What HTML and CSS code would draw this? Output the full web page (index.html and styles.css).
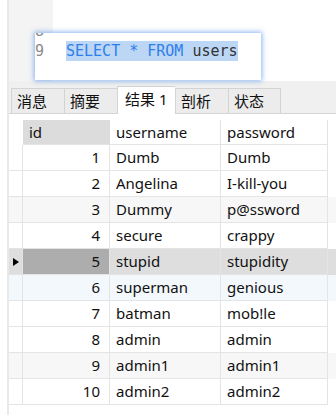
FILE: index.html
```html
<!DOCTYPE html>
<html lang="zh-CN">
<head>
    <meta charset="UTF-8">
    <title>查询结果</title>
    <link rel="stylesheet" href="styles.css">
</head>
<body>
    <div class="window">
        <div class="editor">
            <div class="gutter"></div>
            <div class="code-area"></div>
        </div>

        <div class="tabbar">
            <div class="tab">消息</div>
            <div class="tab">摘要</div>
            <div class="tab active">结果 1</div>
            <div class="tab">剖析</div>
            <div class="tab">状态</div>
        </div>

        <div class="grid">
            <div class="row head">
                <div class="cell ind"></div>
                <div class="cell sorted">id</div>
                <div class="cell">username</div>
                <div class="cell">password</div>
            </div>
            <div class="row">
                <div class="cell ind"></div>
                <div class="cell num">1</div>
                <div class="cell">Dumb</div>
                <div class="cell">Dumb</div>
            </div>
            <div class="row">
                <div class="cell ind"></div>
                <div class="cell num">2</div>
                <div class="cell">Angelina</div>
                <div class="cell">I-kill-you</div>
            </div>
            <div class="row alt">
                <div class="cell ind"></div>
                <div class="cell num">3</div>
                <div class="cell">Dummy</div>
                <div class="cell">p@ssword</div>
            </div>
            <div class="row">
                <div class="cell ind"></div>
                <div class="cell num">4</div>
                <div class="cell">secure</div>
                <div class="cell">crappy</div>
            </div>
            <div class="row selected">
                <div class="cell ind"><span class="arrow"></span></div>
                <div class="cell num">5</div>
                <div class="cell">stupid</div>
                <div class="cell">stupidity</div>
            </div>
            <div class="row hover">
                <div class="cell ind"></div>
                <div class="cell num">6</div>
                <div class="cell">superman</div>
                <div class="cell">genious</div>
            </div>
            <div class="row">
                <div class="cell ind"></div>
                <div class="cell num">7</div>
                <div class="cell">batman</div>
                <div class="cell">mob!le</div>
            </div>
            <div class="row">
                <div class="cell ind"></div>
                <div class="cell num">8</div>
                <div class="cell">admin</div>
                <div class="cell">admin</div>
            </div>
            <div class="row alt">
                <div class="cell ind"></div>
                <div class="cell num">9</div>
                <div class="cell">admin1</div>
                <div class="cell">admin1</div>
            </div>
            <div class="row">
                <div class="cell ind"></div>
                <div class="cell num">10</div>
                <div class="cell">admin2</div>
                <div class="cell">admin2</div>
            </div>
        </div>
    </div>

    <!-- magnified query line, floats over the editor -->
    <div class="zoom-popup">
        <div class="zoom-lines">
            <div class="code-line"><span class="ln">8</span></div>
            <div class="code-line"><span class="ln">9</span><span class="sel"><span class="kw">SELECT * FROM</span> users</span></div>
        </div>
    </div>
</body>
</html>
```

FILE: styles.css
```css
* {
    box-sizing: border-box;
}

body {
    margin: 0;
    width: 336px;
    height: 415px;
    overflow: hidden;
    background: #fff;
    font-family: "Noto Sans", "Noto Sans CJK SC", sans-serif;
    color: #111;
}

.window {
    margin-left: 7px;
    border-left: 2px solid #e9e9e9;
    height: 415px;
}

/* editor */
.editor {
    display: flex;
    height: 81px;
}

.gutter {
    width: 44px;
    background: #f4f4f4;
}

.code-area {
    flex: 1;
}

.zoom-popup {
    position: absolute;
    left: 35px;
    top: 33px;
    width: 226px;
    height: 47px;
    background: #fff;
    box-shadow: 0 0 5px 1px rgba(60, 130, 230, 0.6);
    overflow: hidden;
    font-family: "DejaVu Sans Mono", monospace;
    font-size: 15px;
}

.zoom-lines {
    margin-top: -12px;
}

.code-line {
    display: flex;
    height: 20px;
    line-height: 20px;
    white-space: pre;
}

.ln {
    width: 31px;
    color: #8c8c8c;
}

.sel {
    background: #bcd6f5;
    color: #333;
}

.kw {
    color: #2f7fea;
}

/* tabs */
.tabbar {
    height: 33px;
    background: #f0f0f0;
    border-bottom: 1px solid #d5d5d5;
    display: flex;
    align-items: flex-end;
    padding-left: 2px;
}

.tab {
    height: 25px;
    width: 53px;
    border: 1px solid #d3d3d3;
    border-bottom: none;
    border-right: none;
    background: #ececec;
    font-size: 15px;
    line-height: 24px;
    padding-left: 5px;
    white-space: nowrap;
}

.tab:last-child {
    border-right: 1px solid #d3d3d3;
}

.tab.active {
    height: 28px;
    width: 58px;
    margin-bottom: -1px;
    background: #fff;
    padding-left: 7px;
    line-height: 24px;
}

/* result grid */
.grid {
    padding-top: 6px;
    font-size: 15px;
}

.row {
    display: grid;
    grid-template-columns: 14px 87px 111px 107px;
    height: 26px;
}

.cell {
    border-right: 1px solid #e4e4e4;
    border-bottom: 1px solid #e4e4e4;
    padding: 0 6px;
    line-height: 25px;
    white-space: nowrap;
    overflow: hidden;
}

.cell.ind {
    padding: 0;
    display: flex;
    align-items: center;
    justify-content: center;
}

.cell.num {
    text-align: right;
    padding-right: 9px;
}

.row.head {
    height: 25px;
}

.row.head .cell {
    line-height: 24px;
}

.row.head .ind {
    border: none;
}

.row.head .sorted {
    background: #dcdcdc;
    border-right: none;
}

.row.alt {
    background: #f7f7f7;
}

.row.hover {
    background: #f3f8fd;
}

.row.selected {
    background: #dedede;
}

.row.selected .num {
    background: #adadad;
}

.arrow {
    width: 0;
    height: 0;
    border-left: 6px solid #000;
    border-top: 4.5px solid transparent;
    border-bottom: 4.5px solid transparent;
}
```
